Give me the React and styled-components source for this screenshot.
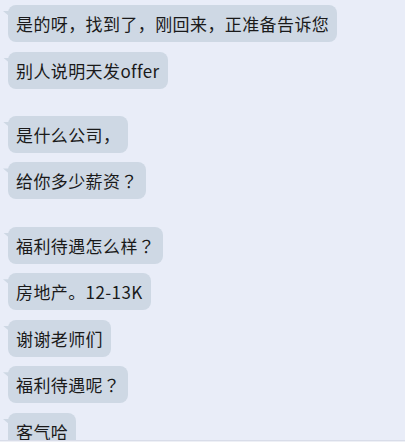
import React from "react";
import styled, { createGlobalStyle } from "styled-components";

const Global = createGlobalStyle`
  html, body { margin: 0; padding: 0; background: #e9edf8; }
  body { font-family: "Noto Sans CJK SC", "Noto Sans", sans-serif; }
`;

const Chat = styled.div`
  width: 405px;
  height: 442px;
  box-sizing: border-box;
  overflow: hidden;
  background: #e9edf8;
  padding: 5px 0 0 8px;
  display: flex;
  flex-direction: column;
  gap: 27.2px;
  position: relative;
  &::after {
    content: "";
    position: absolute;
    left: 0;
    right: 0;
    bottom: 0;
    height: 2px;
    background: linear-gradient(#d9dde9 0 1px, #eef0f6 1px);
  }
`;

const Group = styled.div`
  display: flex;
  flex-direction: column;
  align-items: flex-start;
  gap: 9.6px;
`;

const Bubble = styled.div`
  position: relative;
  flex: none;
  height: 37px;
  line-height: 37px;
  padding: 0 8px;
  border-radius: 8px;
  background: #ced8e4;
  color: #1a1a1a;
  font-size: 17px;
  letter-spacing: 0.4px;
  white-space: nowrap;
  &::before {
    content: "";
    position: absolute;
    left: -5px;
    top: 6px;
    width: 6px;
    height: 5px;
    background: #ced8e4;
    clip-path: polygon(0 0, 100% 0, 100% 100%);
  }
`;

const Punct = styled.span`
  font-family: "Noto Sans CJK JP", "Noto Sans CJK SC", sans-serif;
`;

const groups = [
  ["是的呀，找到了，刚回来，正准备告诉您", "别人说明天发offer"],
  ["是什么公司，", "给你多少薪资？"],
  ["福利待遇怎么样？", "房地产。12-13K", "谢谢老师们", "福利待遇呢？", "客气哈"],
];

function renderText(t) {
  return t.split(/(？)/).map((part, k) =>
    part === "？" ? <Punct key={k}>{part}</Punct> : part
  );
}

export default function App() {
  return (
    <>
      <Global />
      <Chat>
        {groups.map((g, i) => (
          <Group key={i}>
            {g.map((t, j) => (
              <Bubble key={j}>{renderText(t)}</Bubble>
            ))}
          </Group>
        ))}
      </Chat>
    </>
  );
}
